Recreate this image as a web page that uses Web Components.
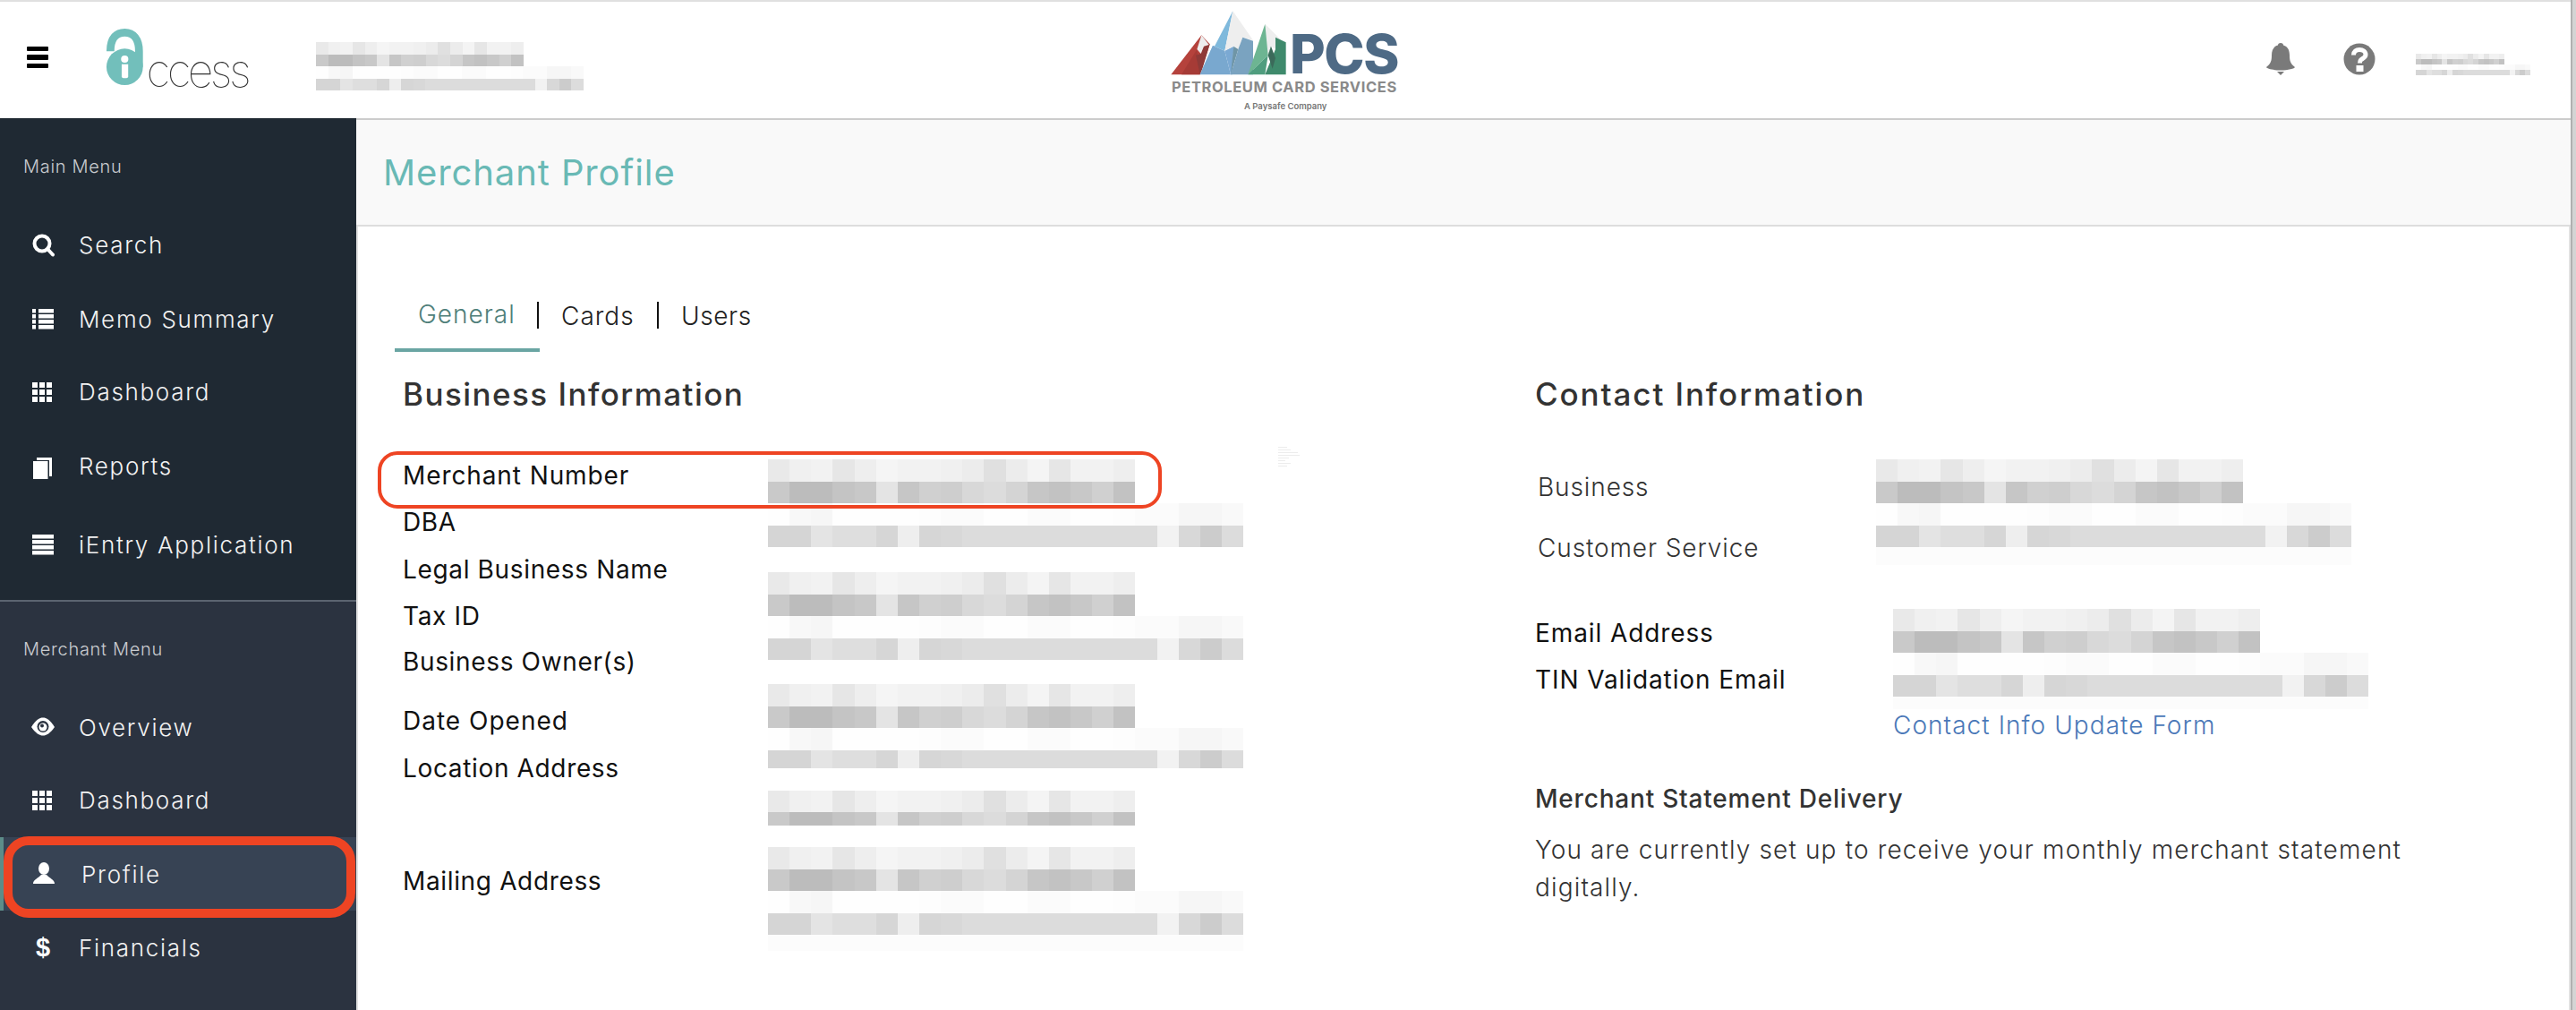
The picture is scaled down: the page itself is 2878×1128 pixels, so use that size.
<!DOCTYPE html>
<html>
<head>
<meta charset="utf-8">
<title>Merchant Profile</title>
<style>
  html, body { margin: 0; height: 100%; overflow: hidden; background: #fff; }
  body { font-family: "Inter", "Liberation Sans", sans-serif; color: #111; }
</style>
</head>
<body>
<app-shell>
  <app-header slot="header"></app-header>
  <side-nav slot="nav"></side-nav>
  <merchant-profile slot="main"></merchant-profile>
</app-shell>

<script>
// pixelated stand-ins for the redacted values
const SHORT_TOP = ['#e9e9e9','#f0f0f0','#f2f2f2','#e6e6e6','#eeeeee','#f5f5f5','#f2f2f2','#f2f2f2','#f0f0f0','#ececec','#e0e0e0','#ececec','#f4f4f4','#e6e6e6','#f2f2f2','#f2f2f2','#eeeeee'];
const SHORT_BOTTOM = ['#c9c9c9','#bcbcbc','#bcbcbc','#c4c4c4','#c8c8c8','#e4e4e4','#c6c6c6','#d0d0d0','#cecece','#d8d8d8','#dcdcdc','#d4d4d4','#c6c6c6','#c2c2c2','#c8c8c8','#d0d0d0','#c2c2c2'];
const LONG_TOP = ['#fefefe','#f8f8f8','#f6f6f6','#fefefe','#fefefe','#fefefe','#fefefe','#fdfdfd','#fbfbfb','#fbfbfb','#fefefe','#fefefe','#fbfbfb','#fbfbfb','#fefefe','#fefefe','#fdfdfd','#fbfbfb','#fbfbfb','#f6f6f6','#f6f6f6','#f9f9f9'];
const LONG_BOTTOM = ['#d5d5d5','#d5d5d5','#e4e4e4','#dedede','#dedede','#d6d6d6','#eeeeee','#d6d6d6','#d8d8d8','#dcdcdc','#dcdcdc','#dcdcdc','#dcdcdc','#dcdcdc','#dcdcdc','#dcdcdc','#dcdcdc','#dcdcdc','#f2f2f2','#d8d8d8','#cccccc','#dcdcdc'];

class BlurText extends HTMLElement {
  connectedCallback() {
    const long = this.getAttribute('variant') === 'long';
    const cell = Number(this.getAttribute('cell') || 24.15);
    const row = Number(this.getAttribute('row') || 24.5);
    const row2 = Number(this.getAttribute('row2') || row);
    const faint = Number(this.getAttribute('faint') || 0);
    const strip = (colors, h) => `<div class="r" style="height:${h}px">` +
      colors.map(c => `<i style="background:${c};width:${cell}px"></i>`).join('') + '</div>';
    const top = long ? LONG_TOP : SHORT_TOP;
    const bottom = long ? LONG_BOTTOM : SHORT_BOTTOM;
    let html = `<style>
      :host { display: block; }
      .r { display: flex; }
      i { display: block; flex: none; height: 100%; }
    </style>`;
    html += strip(top, row) + strip(bottom, row2);
    if (faint) html += strip(top.map(() => '#fcfcfc'), faint);
    this.attachShadow({ mode: 'open' }).innerHTML = html;
  }
}
customElements.define('blur-text', BlurText);

class RingMark extends HTMLElement {
  constructor() {
    super();
    this.attachShadow({ mode: 'open' }).innerHTML = `<style>
      :host {
        display: block;
        position: absolute;
        box-sizing: border-box;
        border: var(--ring, 4px) solid #ee4423;
        border-radius: var(--radius, 22px);
        pointer-events: none;
        z-index: 5;
      }
    </style>`;
  }
}
customElements.define('ring-mark', RingMark);

const shellTemplate = document.createElement('template');
shellTemplate.innerHTML = `
<style>
  :host { display: flex; width: 2878px; height: 1128px; overflow: hidden; }
  .page { width: 2872px; height: 1128px; display: flex; flex-direction: column; flex: none; }
  .top { height: 2px; background: #e0e0e0; flex: none; }
  .below { display: flex; flex: 1; min-height: 0; }
  .edge { flex: 1; background: #d4d4d4; border-left: 2px solid #b0b0b0; }
</style>
<div class="page">
  <div class="top"></div>
  <slot name="header"></slot>
  <div class="below">
    <slot name="nav"></slot>
    <slot name="main"></slot>
  </div>
</div>
<div class="edge"></div>
`;

class AppShell extends HTMLElement {
  constructor() {
    super();
    this.attachShadow({ mode: 'open' }).appendChild(shellTemplate.content.cloneNode(true));
  }
}
customElements.define('app-shell', AppShell);

const headerTemplate = document.createElement('template');
headerTemplate.innerHTML = `
<style>
  :host { display: grid; grid-template-columns: 1fr auto 1fr; height: 130px; background: #fff; flex: none; }
  .left, .right { display: flex; align-items: center; }
  .left { padding-left: 30px; }
  .right { justify-content: flex-end; padding-right: 45px; }
  .burger { width: 24px; display: flex; flex-direction: column; gap: 4px; margin-top: -6px; }
  .burger i { display: block; height: 5.5px; background: #000; border-radius: 1px; }
  .brand { margin-left: 64px; width: 159px; flex: none; display: flex; align-items: flex-start; height: 70px; margin-top: -4px; }
  .brand span {
    font-size: 50px; font-weight: 100; letter-spacing: -3.6px; color: #333;
    line-height: 50px; margin: 24px 0 0 1px;
  }
  .who { margin-left: 76px; margin-top: 14px; }
  .bell { margin-top: -3px; }
  .help { margin-left: 54px; margin-top: -2px; }
  .user { margin-left: 45px; margin-top: 10px; }
</style>
<div class="left">
  <div class="burger"><i></i><i></i><i></i></div>
  <div class="brand">
    <svg width="46" height="70" viewBox="0 0 46 70">
      <path d="M5.5 27C5.5 11 13 5.5 22 5.5C32 5.5 38.5 13 38.5 27V45" fill="none" stroke="#72bfbb" stroke-width="9"/>
      <circle cx="22" cy="45" r="21" fill="#72bfbb"/>
      <circle cx="22" cy="36" r="4.2" fill="#fff"/>
      <path d="M18.5 42H26V56Q26 58 24 58H20.5Q18.5 58 18.5 56Z" fill="#fff"/>
    </svg>
    <span>ccess</span>
  </div>
  <div class="who">
    <blur-text cell="13.65" row="13.5"></blur-text>
    <blur-text variant="long" cell="13.6" row="13.5"></blur-text>
  </div>
</div>
<pcs-logo></pcs-logo>
<div class="right">
  <svg class="bell" width="32" height="36" viewBox="0 0 32 36" fill="#7a7a7a">
    <path d="M16 0C14 0 13 1 13 2.5C8 4 6 8 6 14C6 20 5 23 0 27C0 28.5 8 30.5 16 30.5C24 30.5 32 28.5 32 27C27 23 26 20 26 14C26 8 24 4 19 2.5C19 1 18 0 16 0Z"/>
    <path d="M12 32H20L16 36Z"/>
  </svg>
  <svg class="help" width="36" height="36" viewBox="0 0 36 36">
    <circle cx="18" cy="18" r="17.5" fill="#7a7a7a"/>
    <path d="M11.5 13.5C11.5 9.5 14.5 7.5 18 7.5C22 7.5 25 9.5 25 13C25 16.5 21 17.5 19.5 19C18.5 20 18.5 21 18.5 22.5" fill="none" stroke="#fff" stroke-width="5"/>
    <rect x="14.5" y="25" width="8" height="7" fill="#fff"/>
  </svg>
  <div class="user">
    <blur-text cell="5.8" row="5.8"></blur-text>
    <blur-text variant="long" cell="5.8" row="5.8"></blur-text>
  </div>
</div>
`;

class AppHeader extends HTMLElement {
  constructor() {
    super();
    this.attachShadow({ mode: 'open' }).appendChild(headerTemplate.content.cloneNode(true));
  }
}
customElements.define('app-header', AppHeader);

class PcsLogo extends HTMLElement {
  constructor() {
    super();
    this.attachShadow({ mode: 'open' }).innerHTML = `<style>
      :host { display: flex; flex-direction: column; width: 272px; padding-top: 3px; box-sizing: border-box; }
      .top { display: flex; height: 85px; }
      .pcs { font-size: 61px; font-weight: 800; color: #4e6a85; line-height: 45px; height: 45px; letter-spacing: -1.5px; margin: 33px 0 0 -9px; }
      .name { font-size: 16.5px; font-weight: 700; letter-spacing: .6px; color: #8a8a8a; line-height: 14px; padding-left: 9px; white-space: nowrap; }
      .sub { font-size: 9.5px; font-weight: 600; color: #777; line-height: 12px; margin: 9px 0 0 90px; white-space: nowrap; }
    </style>
    <div class="top">
      <svg width="150" height="85" viewBox="0 0 450 255">
        <polygon points="25,235 127,103 155,133 122,235" fill="#b5423c"/>
        <polygon points="60,235 112,150 122,235" fill="#a63b36"/>
        <polygon points="108,170 125,165 135,140 155,133 130,215 122,235" fill="#8e3a38"/>
        <polygon points="127,103 152,135 135,140 125,165 112,150" fill="#eeeeee"/>
        <polygon points="232,22 205,155 165,138 122,235 122,235" fill="#7fb9dc"/>
        <polygon points="122,235 165,138 205,155 225,235" fill="#79a8cf"/>
        <polygon points="205,155 235,140 230,235 225,235" fill="#7ba9d3"/>
        <polygon points="232,22 300,120 265,110 250,150 235,140 205,155" fill="#eeeeee"/>
        <polygon points="235,140 250,150 225,235" fill="#6f95a6"/>
        <polygon points="250,150 265,110 300,122 300,235 225,235" fill="#7aa3c0"/>
        <polygon points="340,65 283,235 350,170 360,140" fill="#6db592"/>
        <polygon points="283,235 350,170 340,235" fill="#4f9d7e"/>
        <polygon points="340,65 395,120 375,112 375,150 360,140 350,170" fill="#eeeeee"/>
        <polygon points="375,110 410,127 410,235 340,235 375,150" fill="#3f8a6c"/>
        <polygon points="350,170 360,140 375,180 365,215" fill="#3b6a5a"/>
      </svg>
      <div class="pcs">PCS</div>
    </div>
    <div class="name">PETROLEUM CARD SERVICES</div>
    <div class="sub">A Paysafe Company</div>`;
  }
}
customElements.define('pcs-logo', PcsLogo);

const ICONS = {
  search: `<circle cx="13" cy="13" r="8.5" fill="none" stroke="#fff" stroke-width="4"/><path d="M19 19L25 25.5" stroke="#fff" stroke-width="4" stroke-linecap="round"/>`,
  list: [3, 9, 15, 21].map(y => `<rect x="2" y="${y}" width="4" height="4.5"/><rect x="9" y="${y}" width="17" height="4.5"/>`).join(''),
  grid: [4, 12, 20].map(y => [2, 10, 18].map(x => `<rect x="${x}" y="${y}" width="6" height="6"/>`).join('')).join(''),
  copy: `<polygon points="7,5 24,5 24,26 21,26 21,8 7,8"/><rect x="3" y="9" width="16.5" height="20"/>`,
  bars: [3, 9, 15, 21].map(y => `<rect x="2" y="${y}" width="24" height="4.5"/>`).join(''),
  eye: `<path d="M1 14C6 6 10 3.5 14 3.5C18 3.5 22 6 27 14C22 21 18 23.5 14 23.5C10 23.5 6 21 1 14Z"/><circle cx="14" cy="13.5" r="6.5" fill="#2b3340"/><circle cx="14" cy="14" r="4.5"/><circle cx="13" cy="12.5" r="2" fill="#2b3340"/>`,
  user: `<ellipse cx="15" cy="8" rx="6" ry="7"/><path d="M3 25C3 20 9 19 12 15H18C21 19 27 20 27 25Z"/>`
};

const itemTemplate = document.createElement('template');
itemTemplate.innerHTML = `
<style>
  :host {
    display: flex; align-items: center; height: 82px; box-sizing: border-box;
    padding-left: 34px; position: relative;
    font-size: 26px; font-weight: 300; letter-spacing: 1.7px; color: #f2f2f2;
  }
  :host([active]) { background: #374354; box-shadow: inset 4px 0 0 #5c8d89; }
  .icon { width: 54px; height: 28px; flex: none; display: flex; }
  :host([active]) .icon { width: 57px; }
  .text { padding-top: 1px; }
  svg { fill: #fff; display: block; }
  .usd { font: 700 29px/28px "Liberation Sans", sans-serif; color: #fff; width: 28px; text-align: center; letter-spacing: 0; }
</style>
<div class="icon"></div>
<div class="text"><slot></slot></div>
`;

class NavItem extends HTMLElement {
  constructor() {
    super();
    this.attachShadow({ mode: 'open' }).appendChild(itemTemplate.content.cloneNode(true));
  }

  connectedCallback() {
    const name = this.getAttribute('icon');
    const box = this.shadowRoot.querySelector('.icon');
    box.innerHTML = name === 'usd'
      ? '<span class="usd">$</span>'
      : `<svg width="28" height="30" viewBox="0 0 28 30">${ICONS[name]}</svg>`;
  }
}
customElements.define('nav-item', NavItem);

const navTemplate = document.createElement('template');
navTemplate.innerHTML = `
<style>
  :host { display: flex; flex-direction: column; width: 398px; flex: none; color: #ccc; }
  .main { background: #1f2933; height: 498px; border-bottom: 2px solid #5b6470; padding-top: 40px; }
  .merchant { background: #2b3340; flex: 1; padding-top: 39px; }
  h4 { margin: 0 0 32px; padding-left: 26px; font-size: 20px; font-weight: 300; line-height: 28px; letter-spacing: .7px; color: #c9ccd0; }
  nav-item[icon="list"] { margin-top: 1px; }
  .m1 { margin-top: -1px; }
  .p1 { margin-top: 1px; }
  .p6 { margin-top: 6px; }
</style>
<section class="main">
  <h4>Main Menu</h4>
  <nav-item icon="search">Search</nav-item>
  <nav-item icon="list">Memo Summary</nav-item>
  <nav-item icon="grid" class="m1">Dashboard</nav-item>
  <nav-item icon="copy" class="p1">Reports</nav-item>
  <nav-item icon="bars" class="p6">iEntry Application</nav-item>
</section>
<section class="merchant">
  <h4>Merchant Menu</h4>
  <nav-item icon="eye">Overview</nav-item>
  <nav-item icon="grid" class="m1">Dashboard</nav-item>
  <nav-item icon="user" class="p1" active>Profile<ring-mark style="left:4px;top:-1px;width:393px;height:91px;--ring:10px;--radius:28px"></ring-mark></nav-item>
  <nav-item icon="usd">Financials</nav-item>
</section>
`;

class SideNav extends HTMLElement {
  constructor() {
    super();
    this.attachShadow({ mode: 'open' }).appendChild(navTemplate.content.cloneNode(true));
  }
}
customElements.define('side-nav', SideNav);

const tabsTemplate = document.createElement('template');
tabsTemplate.innerHTML = `
<style>
  :host { display: flex; font-size: 28px; font-weight: 300; color: #222; height: 63px; margin-left: -9px; letter-spacing: 1px; }
  div { display: flex; align-items: center; height: 44px; white-space: nowrap; }
  .on { box-sizing: content-box; width: 136px; padding: 0 0 15px 26px; border-bottom: 4px solid #6aa5a3; color: #4f7f7a; }
  .on span { width: 108px; flex: none; margin-top: -2px; }
  i { display: block; width: 2px; height: 30px; background: #111; flex: none; }
  .plain { padding-top: 2px; box-sizing: border-box; }
</style>
<div class="on"><span>General</span><i style="margin-left:25px"></i></div>
<div class="plain" style="margin-left:24px;width:83px">Cards</div>
<div style="margin-left:24px"><i></i></div>
<div class="plain" style="margin-left:25px;letter-spacing:.6px">Users</div>
`;

class PageTabs extends HTMLElement {
  constructor() {
    super();
    this.attachShadow({ mode: 'open' }).appendChild(tabsTemplate.content.cloneNode(true));
  }
}
customElements.define('page-tabs', PageTabs);

const profileTemplate = document.createElement('template');
profileTemplate.innerHTML = `
<style>
  :host { display: flex; flex-direction: column; flex: 1; min-width: 0; background: #fff; }
  .bar {
    height: 117px; box-sizing: content-box; background: #f9f9f9; flex: none;
    border-top: 2px solid #ccc; border-bottom: 2px solid #ddd;
    display: flex; align-items: center; padding-left: 30px;
    font-size: 40px; font-weight: 400; color: #69b9b5; letter-spacing: .9px;
  }
  .body {
    position: relative; flex: 1; display: flex; flex-direction: column;
    border-left: 2px solid #e2e2e2; border-right: 2px solid #e2e2e2;
    padding: 77px 0 0 50px;
  }
  .cols { display: flex; }
  .biz { width: 1265px; flex: none; }
  h2 { margin: 24px 0 0; font-size: 35px; font-weight: 500; line-height: 46px; color: #333; }
  .two { display: flex; }
  .labels { width: 408px; flex: none; display: grid; margin-top: 42px; font-size: 28px; font-weight: 400; color: #111; letter-spacing: .65px;
    grid-template-rows: 52px 53px 52px 51px 66px 53px 126px 52px; line-height: 52px; }
  .values { margin-top: 50px; width: 531px; flex: none; display: flex; flex-direction: column; }
  .stray { width: 24px; margin: 36px 0 0 39px; display: flex; flex-direction: column; gap: 2px; }
  .stray i { display: block; height: 1px; background: #ececec; }
  .g1 { margin-top: 28px; }
  .g2 { margin-top: 27px; }
  .g3 { margin-top: 25px; }
  .g4 { margin-top: 24px; }
  .soft { font-weight: 300; color: #333; font-size: 28px; line-height: 48px; letter-spacing: .9px; }
  .a { display: flex; margin-top: 50px; }
  .a .l { width: 378px; padding-left: 3px; flex: none; padding-top: 7px; display: flex; flex-direction: column; gap: 20px; }
  .b { display: flex; margin-top: 44px; }
  .b .l { width: 400px; flex: none; padding-top: 1px; font-size: 28px; line-height: 52px; color: #111; letter-spacing: .9px; }
  a { display: block; margin-top: -5px; color: #4a78b8; text-decoration: none; font-size: 28px; font-weight: 300; line-height: 46px; letter-spacing: 1.05px; }
  h5 { margin: 37px 0 0; font-size: 28px; font-weight: 500; line-height: 44px; color: #333; letter-spacing: .8px; white-space: nowrap; }
  p { margin: 14px 0 0; font-size: 28px; font-weight: 300; line-height: 42px; color: #333; width: 1010px; letter-spacing: 1.15px; }
</style>
<div class="bar">Merchant Profile</div>
<div class="body">
  <page-tabs></page-tabs>
  <ring-mark style="left:22px;top:251px;width:876px;height:64px"></ring-mark>
  <div class="cols">
    <div class="biz">
      <h2 style="letter-spacing:1.45px">Business Information</h2>
      <div class="two">
        <div class="labels">
          <div style="letter-spacing:.9px">Merchant Number</div><div>DBA</div><div>Legal Business Name</div><div>Tax ID</div>
          <div>Business Owner(s)</div><div style="letter-spacing:1px">Date Opened</div><div>Location Address</div><div>Mailing Address</div>
        </div>
        <div class="values">
          <blur-text></blur-text>
          <blur-text variant="long"></blur-text>
          <blur-text class="g1"></blur-text>
          <blur-text variant="long"></blur-text>
          <blur-text class="g2"></blur-text>
          <blur-text variant="long" row2="20"></blur-text>
          <blur-text class="g3" row2="15"></blur-text>
          <blur-text class="g4"></blur-text>
          <blur-text variant="long" faint="18"></blur-text>
        </div>
        <div class="stray">
          <i style="width:10px"></i><i style="width:14px"></i><i style="width:22px"></i><i style="width:24px"></i>
          <i style="width:12px"></i><i style="width:8px"></i><i style="width:14px"></i><i style="width:10px"></i>
        </div>
      </div>
    </div>
    <div class="contact">
      <h2 style="letter-spacing:1.9px">Contact Information</h2>
      <div class="a">
        <div class="l soft"><div>Business</div><div>Customer Service</div></div>
        <div>
          <blur-text></blur-text>
          <blur-text variant="long" faint="20"></blur-text>
        </div>
      </div>
      <div class="b">
        <div class="l"><div>Email Address</div><div>TIN Validation Email</div></div>
        <div>
          <blur-text></blur-text>
          <blur-text variant="long" faint="14"></blur-text>
          <a href="#">Contact Info Update Form</a>
        </div>
      </div>
      <h5>Merchant Statement Delivery</h5>
      <p>You are currently set up to receive your monthly merchant statement digitally.</p>
    </div>
  </div>
</div>
`;

class MerchantProfile extends HTMLElement {
  constructor() {
    super();
    this.attachShadow({ mode: 'open' }).appendChild(profileTemplate.content.cloneNode(true));
  }
}
customElements.define('merchant-profile', MerchantProfile);
</script>
</body>
</html>
